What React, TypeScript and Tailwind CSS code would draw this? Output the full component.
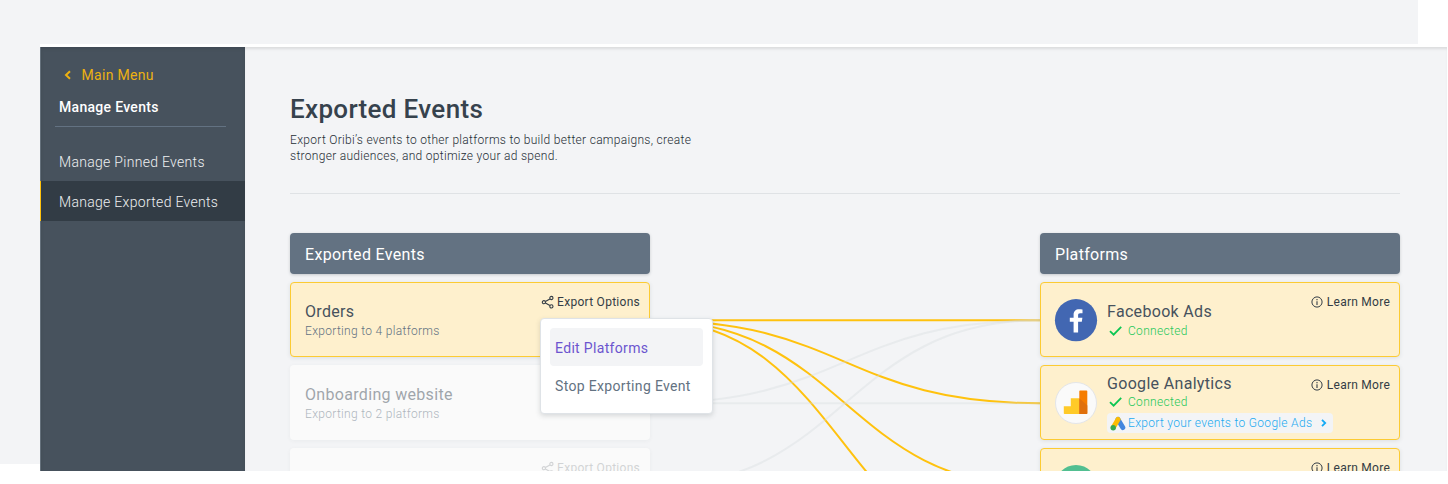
import type { ReactNode } from 'react';

const activeLinks = [320, 403, 486, 569];
const fadedLinks: [number, number][] = [
  [403, 320],
  [403, 403],
  [486, 320],
];

const curve = (from: number, to: number) =>
  `M0 ${from - 282}C195 ${from - 282} 195 ${to - 282} 390 ${to - 282}`;

function Links() {
  return (
    <svg className="block h-[189px] w-[390px]" viewBox="0 0 390 189" fill="none" strokeWidth="2">
      {activeLinks.map((to) => (
        <path key={to} d={curve(320.3, to + 0.3)} stroke="#ffc20e" />
      ))}
      {fadedLinks.map(([from, to]) => (
        <path key={`${from}-${to}`} d={curve(from + 0.3, to + 0.3)} stroke="#d5d9dc" strokeOpacity="0.35" />
      ))}
    </svg>
  );
}

function ShareIcon() {
  return (
    <svg className="h-3 w-3 shrink-0 overflow-visible" viewBox="0 0 12 12" fill="none" stroke="currentColor" strokeWidth="1.1">
      <circle cx="1.9" cy="6.2" r="1.6" />
      <circle cx="9.4" cy="2" r="1.6" />
      <circle cx="9.4" cy="10.4" r="1.6" />
      <path d="M3.4 5.4 7.9 2.9M3.4 7l4.5 2.5" />
    </svg>
  );
}

function InfoIcon() {
  return (
    <svg className="h-3 w-3 shrink-0" viewBox="0 0 12 12" fill="none" stroke="currentColor">
      <circle cx="6" cy="6" r="5.1" />
      <path d="M6 5.2v3.7M6 3.1v1.2" strokeWidth="1.1" />
    </svg>
  );
}

function CheckIcon() {
  return (
    <svg className="h-[10px] w-[13px]" viewBox="0 0 13 10" fill="none" stroke="#0cc653" strokeWidth="1.8">
      <path d="M1 5.2 4.6 8.7 12.2.9" />
    </svg>
  );
}

function FacebookLogo() {
  return (
    <svg className="h-[42px] w-[42px] overflow-visible" viewBox="0 0 42 42">
      <circle cx="21" cy="21.2" r="21.1" fill="#4267b2" />
      <path
        fill="#fff"
        d="M18.6 33.4V22.8h-3.8v-4.1h3.8V16c0-3.8 2.2-5.7 5.5-5.7 1.5 0 2.9.1 3.4.2v3.8h-2.3c-1.7 0-2.1.9-2.1 2.1v2.3h4.3l-.6 4.1h-3.7v10.6z"
      />
    </svg>
  );
}

function AnalyticsLogo() {
  return (
    <svg className="h-[42px] w-[42px]" viewBox="0 0 42 42">
      <circle cx="21" cy="21" r="20.5" fill="#fafafa" stroke="#e3e5e8" />
      <path fill="#ffca28" d="M8.8 24.3h7v-8h8.5V32H9.6a.8.8 0 0 1-.8-.8z" />
      <path fill="#f57c00" d="M24.3 9.2a.8.8 0 0 1 .8-.8h6.4a.8.8 0 0 1 .8.8v22a.8.8 0 0 1-.8.8h-7.2z" />
      <path fill="#e0700c" d="m24.3 16.3 8 7.2v7.7a.8.8 0 0 1-.8.8h-7.2z" />
    </svg>
  );
}

function GoogleAdsLogo() {
  return (
    <svg className="h-[15px] w-4 shrink-0" viewBox="0 0 16 15" strokeWidth="5" strokeLinecap="round">
      <path d="M8 3.4 12.8 11.6" stroke="#4285de" />
      <path d="M8 3.4 3.3 11.4" stroke="#fbbc04" />
      <circle cx="3.2" cy="11.8" r="2.7" fill="#34a853" />
    </svg>
  );
}

function ColumnHeader({ children }: { children: ReactNode }) {
  return (
    <div className="flex h-[41px] items-center rounded bg-[#637282] px-[15px] pt-0.5 text-[16px] tracking-[0.32px] text-white shadow-[0_1px_3px_rgba(60,70,80,0.25)]">
      {children}
    </div>
  );
}

function ExportOptions() {
  return (
    <div className="flex h-4 items-center gap-[3px] whitespace-nowrap text-[12px] leading-4 tracking-[0.27px] text-[#333c45]">
      <ShareIcon />
      <span>Export Options</span>
    </div>
  );
}

function LearnMore() {
  return (
    <div className="flex h-4 items-center gap-1 whitespace-nowrap text-[12px] leading-4 tracking-[0.25px] text-[#333c45]">
      <InfoIcon />
      <span>Learn More</span>
    </div>
  );
}

const highlighted =
  'flex h-[75px] shrink-0 justify-between rounded border border-[#fccb33] bg-[#fef0cd] pl-[14px] pr-[9px] shadow-[0_1px_4px_rgba(60,70,80,0.12)]';
const faded =
  'flex h-[75px] shrink-0 justify-between rounded bg-[#fafafa] pl-[15px] pr-[10px] shadow-[0_1px_4px_rgba(60,70,80,0.05)]';
const title = 'text-[16px] leading-5 tracking-[0.32px] text-[#47525d]';
const subtitle = 'mt-px text-[12px] font-light leading-4 tracking-[0.31px] text-[#637282]';

function Connected() {
  return (
    <div className="flex h-4 items-center gap-[6px] pl-[2px] text-[12px] font-light leading-4 tracking-[0.33px] text-[#1ec85c]">
      <CheckIcon />
      <span>Connected</span>
    </div>
  );
}

function Menu() {
  return (
    <div className="absolute left-[250px] top-[36px] z-10 flex h-[96px] w-[173px] flex-col rounded border border-[#dfe3e7] bg-white px-[9px] pt-[9px] text-[14px] tracking-[0.33px] shadow-[0_2px_5px_rgba(60,70,80,0.18)]">
      <div className="flex h-[38px] items-center rounded bg-[#f3f4f6] px-[5px] pt-0.5 text-[#6c54cf]">Edit Platforms</div>
      <div className="flex h-[38px] items-center whitespace-nowrap px-[5px] pt-0.5 text-[#637282]">Stop Exporting Event</div>
    </div>
  );
}

function EventsColumn() {
  return (
    <section className="flex w-[360px] flex-col gap-2">
      <ColumnHeader>Exported Events</ColumnHeader>
      <div className="relative flex flex-col gap-2">
        <div className={highlighted}>
          <div className="pt-[19px]">
            <h3 className={title}>Orders</h3>
            <p className={subtitle}>Exporting to 4 platforms</p>
          </div>
          <div className="pt-[11px]">
            <ExportOptions />
          </div>
        </div>
        <div className={faded}>
          <div className="pt-5 opacity-50">
            <h3 className={title}>Onboarding website</h3>
            <p className={subtitle}>Exporting to 2 platforms</p>
          </div>
        </div>
        <div className={faded}>
          <div />
          <div className="pt-3 opacity-20">
            <ExportOptions />
          </div>
        </div>
        <Menu />
      </div>
    </section>
  );
}

function PlatformsColumn() {
  return (
    <section className="flex w-[360px] flex-col gap-2">
      <ColumnHeader>Platforms</ColumnHeader>
      <div className={highlighted}>
        <div className="flex gap-[10px]">
          <div className="pt-4">
            <FacebookLogo />
          </div>
          <div className="flex flex-col gap-px pt-[19px]">
            <h3 className={title}>Facebook Ads</h3>
            <Connected />
          </div>
        </div>
        <div className="pt-[11px]">
          <LearnMore />
        </div>
      </div>
      <div className={highlighted}>
        <div className="flex gap-[10px]">
          <div className="pt-4">
            <AnalyticsLogo />
          </div>
          <div className="w-[194px] pt-2">
            <h3 className={title}>Google Analytics</h3>
            <Connected />
            <div className="mt-[3px] flex h-5 w-[226px] items-center rounded bg-[#f3f4f6] pl-[3px] text-[12px] font-light tracking-[0.31px] text-[#1caaf0]">
              <GoogleAdsLogo />
              <span className="ml-[2px] whitespace-nowrap">Export your events to Google Ads</span>
              <svg className="ml-[9px] h-2 w-[6px] shrink-0" viewBox="0 0 6 8" fill="none" stroke="#13aaf5" strokeWidth="1.8">
                <path d="m1 .9 3.2 3.1L1 7.1" />
              </svg>
            </div>
          </div>
        </div>
        <div className="pt-[11px]">
          <LearnMore />
        </div>
      </div>
      <div className={highlighted}>
        <div className="pt-4">
          <div className="h-[42px] w-[42px] rounded-full bg-[#52bf91]" />
        </div>
        <div className="pt-[11px]">
          <LearnMore />
        </div>
      </div>
    </section>
  );
}

function Sidebar() {
  return (
    <nav className="flex w-[205px] shrink-0 flex-col border-l border-[#65717c] bg-[#47525d] text-[14px] tracking-[0.3px] shadow-[inset_0_2px_3px_rgba(0,0,0,0.1)]">
      <div className="mt-[18px] flex h-5 items-center gap-[10px] pl-[23px] text-[#edb111]">
        <svg className="h-[10px] w-[7px]" viewBox="0 0 7 10" fill="none" stroke="currentColor" strokeWidth="2">
          <path d="M6 1.2 2 5l4 3.8" />
        </svg>
        <span className="pl-[0.5px]">Main Menu</span>
      </div>
      <div className="mt-3 h-5 pl-[18px] font-medium leading-5 tracking-[0.3px] text-white">Manage Events</div>
      <div className="ml-[14px] mt-[9px] h-px w-[171px] bg-[#637282]" />
      <div className="mt-[14px] flex h-10 items-center pl-[18px] pt-0.5 font-light text-[#eef0f2]">Manage Pinned Events</div>
      <div className="-ml-px flex h-10 items-center border-l border-[#ffc20e] bg-[#323c45] pl-[18px] pt-0.5 font-light text-[#eef0f2]">
        Manage Exported Events
      </div>
    </nav>
  );
}

export default function App() {
  return (
    <div className="grid h-[484px] w-[1448px] overflow-hidden bg-white font-['Roboto',sans-serif]">
      <div className="col-start-1 row-start-1 h-[464px] w-[1418px] bg-[#f3f4f6]" />
      <div className="relative col-start-1 row-start-1 ml-10 flex h-[471px] w-[1407px] flex-col self-start pt-11">
        <div className="h-[3px] bg-white" />
        <div className="flex h-[424px] overflow-hidden bg-[#f3f4f6]">
          <Sidebar />
          <main className="flex grow flex-col pl-[45px] pr-[47px] shadow-[inset_0_3px_3px_-1px_rgba(0,0,0,0.1)]">
            <h1 className="mt-[46px] text-[26px] font-medium leading-8 tracking-[0.33px] text-[#36424d]">Exported Events</h1>
            <p className="mt-[7px] w-[430px] text-[12px] font-light leading-4 tracking-[0.3px] text-[#252d35]">
              Export Oribi’s events to other platforms to build better campaigns, create
              <br />
              stronger audiences, and optimize your ad spend.
            </p>
            <hr className="mt-[29px] border-[#dfe2e5]" />
            <div className="mt-[39px] flex">
              <EventsColumn />
              <div className="pt-[49px]">
                <Links />
              </div>
              <PlatformsColumn />
            </div>
          </main>
        </div>
      </div>
    </div>
  );
}
